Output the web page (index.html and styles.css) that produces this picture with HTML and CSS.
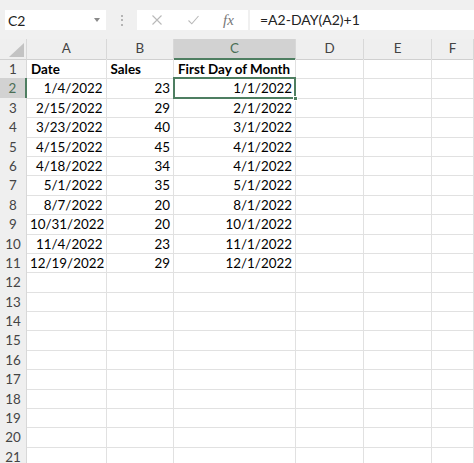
FILE: index.html
```html
<!DOCTYPE html>
<html>
<head>
<meta charset="utf-8">
<link rel="stylesheet" href="styles.css">
</head>
<body>
<div class="topbar">
  <div class="namebox"><span class="ref">C2</span><span class="caret"></span></div>
  <div class="dots"><i></i><i></i><i></i></div>
  <div class="fxbox">
    <svg class="ico" width="12" height="12" viewBox="0 0 12 12"><path d="M1.5 1.5 L10.5 10.5 M10.5 1.5 L1.5 10.5" stroke="#b9b9b9" stroke-width="1.1" fill="none"/></svg>
    <svg class="ico" width="13" height="12" viewBox="0 0 13 12"><path d="M1.5 6.5 L4.8 9.8 L11.5 2" stroke="#b9b9b9" stroke-width="1.1" fill="none"/></svg>
    <span class="fx">fx</span>
  </div>
  <div class="formula">=A2-DAY(A2)+1</div>
</div>
<div class="sheet">
  <div class="row head">
    <div class="c corner"><span class="tri"></span></div>
    <div class="c">A</div><div class="c">B</div><div class="c sel">C</div><div class="c">D</div><div class="c">E</div><div class="c">F</div>
  </div>
  <div class="row"><div class="c rh">1</div><div class="c b">Date</div><div class="c b">Sales</div><div class="c b">First Day of Month</div><div class="c"></div><div class="c"></div><div class="c"></div></div>
  <div class="row"><div class="c rh sel">2</div><div class="c n">1/4/2022</div><div class="c n">23</div><div class="c n active">1/1/2022</div><div class="c"></div><div class="c"></div><div class="c"></div></div>
  <div class="row"><div class="c rh">3</div><div class="c n">2/15/2022</div><div class="c n">29</div><div class="c n">2/1/2022</div><div class="c"></div><div class="c"></div><div class="c"></div></div>
  <div class="row"><div class="c rh">4</div><div class="c n">3/23/2022</div><div class="c n">40</div><div class="c n">3/1/2022</div><div class="c"></div><div class="c"></div><div class="c"></div></div>
  <div class="row"><div class="c rh">5</div><div class="c n">4/15/2022</div><div class="c n">45</div><div class="c n">4/1/2022</div><div class="c"></div><div class="c"></div><div class="c"></div></div>
  <div class="row"><div class="c rh">6</div><div class="c n">4/18/2022</div><div class="c n">34</div><div class="c n">4/1/2022</div><div class="c"></div><div class="c"></div><div class="c"></div></div>
  <div class="row"><div class="c rh">7</div><div class="c n">5/1/2022</div><div class="c n">35</div><div class="c n">5/1/2022</div><div class="c"></div><div class="c"></div><div class="c"></div></div>
  <div class="row"><div class="c rh">8</div><div class="c n">8/7/2022</div><div class="c n">20</div><div class="c n">8/1/2022</div><div class="c"></div><div class="c"></div><div class="c"></div></div>
  <div class="row"><div class="c rh">9</div><div class="c n">10/31/2022</div><div class="c n">20</div><div class="c n">10/1/2022</div><div class="c"></div><div class="c"></div><div class="c"></div></div>
  <div class="row"><div class="c rh">10</div><div class="c n">11/4/2022</div><div class="c n">23</div><div class="c n">11/1/2022</div><div class="c"></div><div class="c"></div><div class="c"></div></div>
  <div class="row"><div class="c rh">11</div><div class="c n">12/19/2022</div><div class="c n">29</div><div class="c n">12/1/2022</div><div class="c"></div><div class="c"></div><div class="c"></div></div>
  <div class="row"><div class="c rh">12</div><div class="c"></div><div class="c"></div><div class="c"></div><div class="c"></div><div class="c"></div><div class="c"></div></div>
  <div class="row"><div class="c rh">13</div><div class="c"></div><div class="c"></div><div class="c"></div><div class="c"></div><div class="c"></div><div class="c"></div></div>
  <div class="row"><div class="c rh">14</div><div class="c"></div><div class="c"></div><div class="c"></div><div class="c"></div><div class="c"></div><div class="c"></div></div>
  <div class="row"><div class="c rh">15</div><div class="c"></div><div class="c"></div><div class="c"></div><div class="c"></div><div class="c"></div><div class="c"></div></div>
  <div class="row"><div class="c rh">16</div><div class="c"></div><div class="c"></div><div class="c"></div><div class="c"></div><div class="c"></div><div class="c"></div></div>
  <div class="row"><div class="c rh">17</div><div class="c"></div><div class="c"></div><div class="c"></div><div class="c"></div><div class="c"></div><div class="c"></div></div>
  <div class="row"><div class="c rh">18</div><div class="c"></div><div class="c"></div><div class="c"></div><div class="c"></div><div class="c"></div><div class="c"></div></div>
  <div class="row"><div class="c rh">19</div><div class="c"></div><div class="c"></div><div class="c"></div><div class="c"></div><div class="c"></div><div class="c"></div></div>
  <div class="row"><div class="c rh">20</div><div class="c"></div><div class="c"></div><div class="c"></div><div class="c"></div><div class="c"></div><div class="c"></div></div>
  <div class="row"><div class="c rh">21</div><div class="c"></div><div class="c"></div><div class="c"></div><div class="c"></div><div class="c"></div><div class="c"></div></div>
</div>
</body>
</html>
```
FILE: styles.css
```css
html, body {
  margin: 0;
  padding: 0;
  background: #ffffff;
  overflow: hidden;
}
body {
  font-family: Lato, "Open Sans", sans-serif;
  font-size: 13.4px;
  color: #000;
  width: 474px;
  height: 463px;
}
.topbar {
  height: 39px;
  background: #f0f0f0;
  display: flex;
  align-items: center;
  box-sizing: border-box;
  padding-top: 1px;
}
.namebox {
  margin-left: 5px;
  width: 101px;
  height: 20px;
  background: #fff;
  display: flex;
  align-items: center;
  justify-content: space-between;
  box-sizing: border-box;
  padding: 0 6px 0 3px;
}
.ref {
  font-size: 14px;
  color: #222;
}
.caret {
  width: 0;
  height: 0;
  border-left: 3.5px solid transparent;
  border-right: 3.5px solid transparent;
  border-top: 4px solid #8a8a8a;
}
.dots {
  width: 31px;
  display: flex;
  flex-direction: column;
  align-items: center;
  gap: 2.5px;
}
.dots i {
  display: block;
  width: 2px;
  height: 2px;
  background: #b4b4b4;
}
.fxbox {
  width: 111px;
  height: 20px;
  background: #fff;
  display: flex;
  align-items: center;
  box-sizing: border-box;
  padding-left: 14px;
  gap: 24px;
}
.ico { display: block; }
.fx {
  font-family: "Liberation Serif", "DejaVu Serif", serif;
  font-style: italic;
  font-size: 15px;
  color: #777;
  margin-left: -1px;
}
.formula {
  flex: 1;
  height: 20px;
  margin-left: 2px;
  background: #fff;
  box-sizing: border-box;
  padding-left: 10px;
  line-height: 20px;
  font-size: 14px;
  color: #222;
}
.sheet {
  display: flex;
  flex-direction: column;
}
.row {
  display: grid;
  grid-template-columns: 27px 79.5px 67.5px 122px 68px 68px 1fr;
  height: 19.4px;
}
.row.head {
  height: 20px;
  background: #efefef;
}
.c {
  box-sizing: border-box;
  border-right: 1px solid #e1e1e1;
  border-bottom: 1px solid #e1e1e1;
  white-space: nowrap;
  overflow: visible;
  line-height: 18.4px;
  padding: 1px 3px 0;
}
.head .c {
  text-align: center;
  color: #444;
  line-height: 19px;
  padding-top: 0;
  border-right: 1px solid #d8d8d8;
  border-bottom: 1px solid #d0d0d0;
  background: #efefef;
}
.head .c.sel {
  background: #d2d2d2;
  color: #4a6e55;
  border-bottom: 2px solid #4e7e61;
}
.corner {
  position: relative;
}
.tri {
  position: absolute;
  right: 2px;
  bottom: 2px;
  width: 0;
  height: 0;
  border-left: 15px solid transparent;
  border-bottom: 14px solid #c3c3c3;
}
.rh {
  background: #efefef;
  color: #444;
  text-align: center;
  padding: 1px 0 0;
  border-right: 1px solid #d8d8d8;
  border-bottom: 1px solid #dedede;
}
.rh.sel {
  background: #d2d2d2;
  color: #4a6e55;
  border-right: 2px solid #4e7e61;
}
.b {
  font-weight: bold;
  padding-left: 4px;
}
.n {
  text-align: right;
  padding-right: 3px;
}
.active {
  position: relative;
}
.active::after {
  content: "";
  position: absolute;
  left: -1px;
  top: -1px;
  right: -1px;
  bottom: -1px;
  border: 2px solid #4e7e61;
}
.active::before {
  content: "";
  position: absolute;
  right: -3px;
  bottom: -3px;
  width: 5px;
  height: 5px;
  background: #4e7e61;
  border: 1px solid #fff;
  box-sizing: border-box;
  z-index: 2;
}
```
